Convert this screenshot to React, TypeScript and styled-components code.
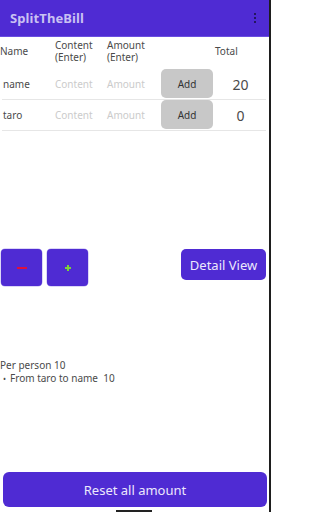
import styled, { createGlobalStyle } from 'styled-components';

const GlobalStyle = createGlobalStyle`
  html, body {
    margin: 0;
    padding: 0;
    background: #fff;
  }
  body {
    font-family: "Noto Sans", "Open Sans", sans-serif;
  }
`;

const PURPLE = '#4f2bd3';

const people = [
  { name: 'name', total: 20 },
  { name: 'taro', total: 0 },
];

export default function App() {
  return (
    <Screen>
      <GlobalStyle />
      <AppBar>
        <Title>SplitTheBill</Title>
        <MenuDots>
          <span />
          <span />
          <span />
        </MenuDots>
      </AppBar>

      <Table>
        <HeadRow>
          <HeadCell>Name</HeadCell>
          <HeadCell>
            Content
            <br />
            (Enter)
          </HeadCell>
          <HeadCell>
            Amount
            <br />
            (Enter)
          </HeadCell>
          <HeadCell />
          <HeadCell $total>Total</HeadCell>
        </HeadRow>
        {people.map((p) => (
          <Row key={p.name}>
            <NameCell>{p.name}</NameCell>
            <Placeholder>Content</Placeholder>
            <Placeholder>Amount</Placeholder>
            <AddButton>Add</AddButton>
            <TotalCell>{p.total}</TotalCell>
          </Row>
        ))}
      </Table>

      <ButtonBar>
        <SquareButton aria-label="remove">
          <MinusMark />
        </SquareButton>
        <SquareButton aria-label="add">
          <PlusMark />
        </SquareButton>
        <DetailButton>Detail View</DetailButton>
      </ButtonBar>

      <Summary>
        <div>Per person 10</div>
        <Payment>
          <Bullet>•</Bullet>From taro to name&nbsp; 10
        </Payment>
      </Summary>

      <ResetButton>Reset all amount</ResetButton>
      <HomeBar />
    </Screen>
  );
}

const Screen = styled.div`
  width: 271px;
  height: 512px;
  box-sizing: border-box;
  border-right: 2px solid #1e1e1e;
  display: flex;
  flex-direction: column;
  overflow: hidden;
  color: #4a4a4a;
`;

const AppBar = styled.div`
  height: 36px;
  flex-shrink: 0;
  background: ${PURPLE};
  display: flex;
  align-items: center;
  justify-content: space-between;
  padding: 0 13px 0 10px;
  border-bottom: 1px solid #6a4ee0;
`;

const Title = styled.div`
  color: #c9c1f2;
  font-weight: 700;
  font-size: 13px;
  letter-spacing: 0.1px;
`;

const MenuDots = styled.div`
  display: flex;
  flex-direction: column;
  gap: 1.5px;
  span {
    width: 2.5px;
    height: 2.5px;
    border-radius: 50%;
    background: #15103a;
  }
`;

const Table = styled.div`
  display: flex;
  flex-direction: column;
`;

const grid = `
  display: grid;
  align-items: center;
`;

const HeadRow = styled.div`
  ${grid}
  grid-template-columns: 55px 52px 54px 52px 1fr;
  height: 32px;
  font-size: 10px;
  line-height: 12.5px;
`;

const HeadCell = styled.div<{ $total?: boolean }>`
  padding-left: ${(p) => (p.$total ? '2px' : '0')};
  margin-top: -4px;
`;

const Row = styled.div`
  ${grid}
  grid-template-columns: 53px 52px 54px 52px 1fr;
  height: 30px;
  margin: 0 3px 0 2px;
  border-bottom: 1px solid #e6e6e6;
`;

const NameCell = styled.div`
  font-size: 10px;
  padding-left: 1px;
`;

const Placeholder = styled.div`
  font-size: 10px;
  color: #cbcbcb;
`;

const AddButton = styled.button`
  height: 29px;
  align-self: start;
  border: none;
  border-radius: 5px;
  background: #c8c8c8;
  color: #333;
  font-family: inherit;
  font-size: 10px;
  padding: 0;
`;

const TotalCell = styled.div`
  font-size: 14px;
  text-align: center;
  padding-left: 2px;
`;

const ButtonBar = styled.div`
  display: flex;
  align-items: flex-start;
  gap: 5px;
  margin-top: 118px;
  padding: 0 3px 0 1px;
`;

const SquareButton = styled.button`
  width: 41px;
  height: 37px;
  border: none;
  border-radius: 4px;
  background: ${PURPLE};
  display: flex;
  align-items: center;
  justify-content: center;
  padding: 0;
  box-shadow: 0 0 0 0.5px #b9aef0;
`;

const MinusMark = styled.span`
  width: 10px;
  height: 2px;
  background: #e0103a;
`;

const PlusMark = styled.span`
  position: relative;
  width: 6px;
  height: 6px;
  &::before,
  &::after {
    content: '';
    position: absolute;
    background: #7ad23a;
  }
  &::before {
    left: 0;
    top: 2px;
    width: 6px;
    height: 2px;
  }
  &::after {
    left: 2px;
    top: 0;
    width: 2px;
    height: 6px;
  }
`;

const DetailButton = styled.button`
  margin-left: auto;
  width: 85px;
  height: 31px;
  border: none;
  border-radius: 5px;
  background: ${PURPLE};
  color: #ece8fc;
  font-family: inherit;
  font-size: 13px;
  padding: 0;
`;

const Summary = styled.div`
  margin-top: 73px;
  font-size: 10px;
  line-height: 13px;
`;

const Payment = styled.div`
  padding-left: 3px;
`;

const Bullet = styled.span`
  margin-right: 4px;
  font-size: 8px;
`;

const ResetButton = styled.button`
  margin: auto 2px 0 3px;
  height: 35px;
  border: none;
  border-radius: 6px;
  background: ${PURPLE};
  color: #ece8fc;
  font-family: inherit;
  font-size: 13px;
  flex-shrink: 0;
`;

const HomeBar = styled.div`
  align-self: flex-start;
  margin: 3px 0 0 116px;
  width: 36px;
  height: 2px;
  background: #222;
  flex-shrink: 0;
`;
